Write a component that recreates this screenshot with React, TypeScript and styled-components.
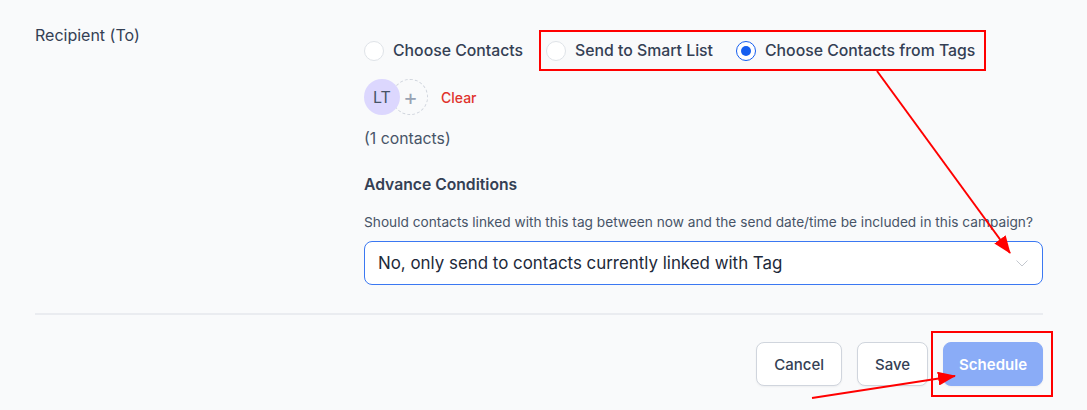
import React from 'react';
import styled, { createGlobalStyle } from 'styled-components';

const GlobalStyle = createGlobalStyle`
  html, body {
    margin: 0;
    padding: 0;
    background: #f9fafb;
  }

  body {
    font-family: Inter, 'Noto Sans', sans-serif;
    color: #344054;
  }
`;

const Page = styled.div`
  position: relative;
  box-sizing: border-box;
  width: 1087px;
  height: 410px;
  padding: 25px 44px 0 35px;
  background: #f9fafb;
  overflow: hidden;
`;

const FormRow = styled.div`
  display: grid;
  grid-template-columns: 329px 1fr;
`;

const FieldLabel = styled.div`
  font-size: 16px;
  line-height: 20px;
  color: #344054;
`;

const Content = styled.div`
  display: flex;
  flex-direction: column;
  padding-top: 16px;
`;

const RadioGroup = styled.div`
  display: flex;
  align-items: center;
  gap: 23px;
  height: 20px;
`;

const RadioOption = styled.label`
  display: flex;
  align-items: center;
  gap: 9px;
  font-size: 15.8px;
  font-weight: 500;
  line-height: 20px;
  color: #344054;
`;

const RadioCircle = styled.span<{ $checked?: boolean }>`
  box-sizing: border-box;
  display: flex;
  align-items: center;
  justify-content: center;
  width: 20px;
  height: 20px;
  border-radius: 50%;
  background: #fff;
  border: ${(p) => (p.$checked ? '1.5px solid #155eef' : '1px solid #dfe3e8')};

  &::after {
    content: '';
    display: ${(p) => (p.$checked ? 'block' : 'none')};
    width: 10px;
    height: 10px;
    border-radius: 50%;
    background: #155eef;
  }
`;

const ContactsRow = styled.div`
  display: flex;
  align-items: center;
  margin-top: 18px;
`;

const Avatar = styled.div`
  position: relative;
  z-index: 1;
  display: flex;
  align-items: center;
  justify-content: center;
  width: 36px;
  height: 36px;
  border-radius: 50%;
  background: #dcd7fe;
  color: #475467;
  font-size: 16px;
`;

const AddCircle = styled.div`
  box-sizing: border-box;
  display: flex;
  align-items: center;
  justify-content: center;
  width: 36px;
  height: 36px;
  margin-left: -8px;
  padding-left: 1px;
  border-radius: 50%;
  border: 1px dashed #d0d5dd;
  color: #98a2b3;
  font-size: 22px;
  font-weight: 400;
`;

const ClearLink = styled.span`
  margin-left: 13px;
  font-size: 14px;
  font-weight: 500;
  color: #e0322c;
`;

const Count = styled.div`
  margin-top: 14px;
  font-size: 15.8px;
  line-height: 20px;
  color: #475467;
`;

const Heading = styled.div`
  margin-top: 26px;
  font-size: 15.7px;
  font-weight: 600;
  line-height: 20px;
  color: #344054;
`;

const Question = styled.div`
  margin-top: 18px;
  font-size: 13.7px;
  line-height: 18px;
  color: #475467;
`;

const Select = styled.div`
  box-sizing: border-box;
  display: flex;
  align-items: center;
  justify-content: space-between;
  margin-top: 10px;
  height: 44px;
  padding: 0 14px 0 13px;
  border: 1px solid #3b78f2;
  border-radius: 8px;
  background: #fff;
  font-size: 16.9px;
  color: #1d2939;
`;

const Divider = styled.div`
  margin-top: 28px;
  height: 2px;
  background: #eaecf0;
`;

const Footer = styled.div`
  display: flex;
  justify-content: flex-end;
  gap: 15px;
  margin-top: 27px;
`;

const Button = styled.button<{ $primary?: boolean }>`
  box-sizing: border-box;
  height: 44px;
  padding: 0 ${(p) => (p.$primary ? '15px' : '17px')};
  border-radius: 8px;
  font-family: inherit;
  font-size: 15px;
  font-weight: ${(p) => (p.$primary ? 600 : 500)};
  color: ${(p) => (p.$primary ? '#fff' : '#344054')};
  background: ${(p) => (p.$primary ? '#8aacf7' : '#fff')};
  border: 1px solid ${(p) => (p.$primary ? '#8aacf7' : '#d0d5dd')};
  box-shadow: 0 1px 2px rgba(16, 24, 40, 0.05);
`;

const Annotations = styled.svg`
  position: absolute;
  top: 0;
  left: 0;
  pointer-events: none;
`;

const Chevron = () => (
  <svg width="12" height="7" viewBox="0 0 12 7" fill="none">
    <path d="M0.5 0.5L6 6L11.5 0.5" stroke="#c4c8cf" strokeWidth="1" />
  </svg>
);

const App: React.FC = () => {
  const options = [
    { label: 'Choose Contacts', checked: false },
    { label: 'Send to Smart List', checked: false },
    { label: 'Choose Contacts from Tags', checked: true },
  ];

  return (
    <>
      <GlobalStyle />
      <Page>
        <FormRow>
          <FieldLabel>{'Recipient (To)'}</FieldLabel>

          <Content>
            <RadioGroup>
              {options.map((o) => (
                <RadioOption key={o.label}>
                  <RadioCircle $checked={o.checked} />
                  {o.label}
                </RadioOption>
              ))}
            </RadioGroup>

            <ContactsRow>
              <Avatar>{'LT'}</Avatar>
              <AddCircle>{'+'}</AddCircle>
              <ClearLink>{'Clear'}</ClearLink>
            </ContactsRow>

            <Count>{'(1 contacts)'}</Count>

            <Heading>{'Advance Conditions'}</Heading>
            <Question>
              {'Should contacts linked with this tag between now and the send date/time be included in this campaign?'}
            </Question>

            <Select>
              <span>{'No, only send to contacts currently linked with Tag'}</span>
              <Chevron />
            </Select>
          </Content>
        </FormRow>

        <Divider />

        <Footer>
          <Button>{'Cancel'}</Button>
          <Button>{'Save'}</Button>
          <Button $primary>{'Schedule'}</Button>
        </Footer>

        <Annotations width="1087" height="410" viewBox="0 0 1087 410">
          <defs>
            <marker id="head" markerUnits="userSpaceOnUse" markerWidth="18" markerHeight="14"
              refX="17" refY="7" orient="auto">
              <path d="M0 0L18 7L0 14Z" fill="#ff0000" />
            </marker>
          </defs>
          <rect x="540" y="31" width="445" height="39" fill="none" stroke="#ff0000" strokeWidth="2" />
          <rect x="932" y="332" width="120" height="64" fill="none" stroke="#ff0000" strokeWidth="2" />
          <line x1="877" y1="71" x2="1010" y2="253" stroke="#ff0000" strokeWidth="2" markerEnd="url(#head)" />
          <line x1="812" y1="398" x2="955" y2="376" stroke="#ff0000" strokeWidth="2" markerEnd="url(#head)" />
        </Annotations>
      </Page>
    </>
  );
};

export default App;
